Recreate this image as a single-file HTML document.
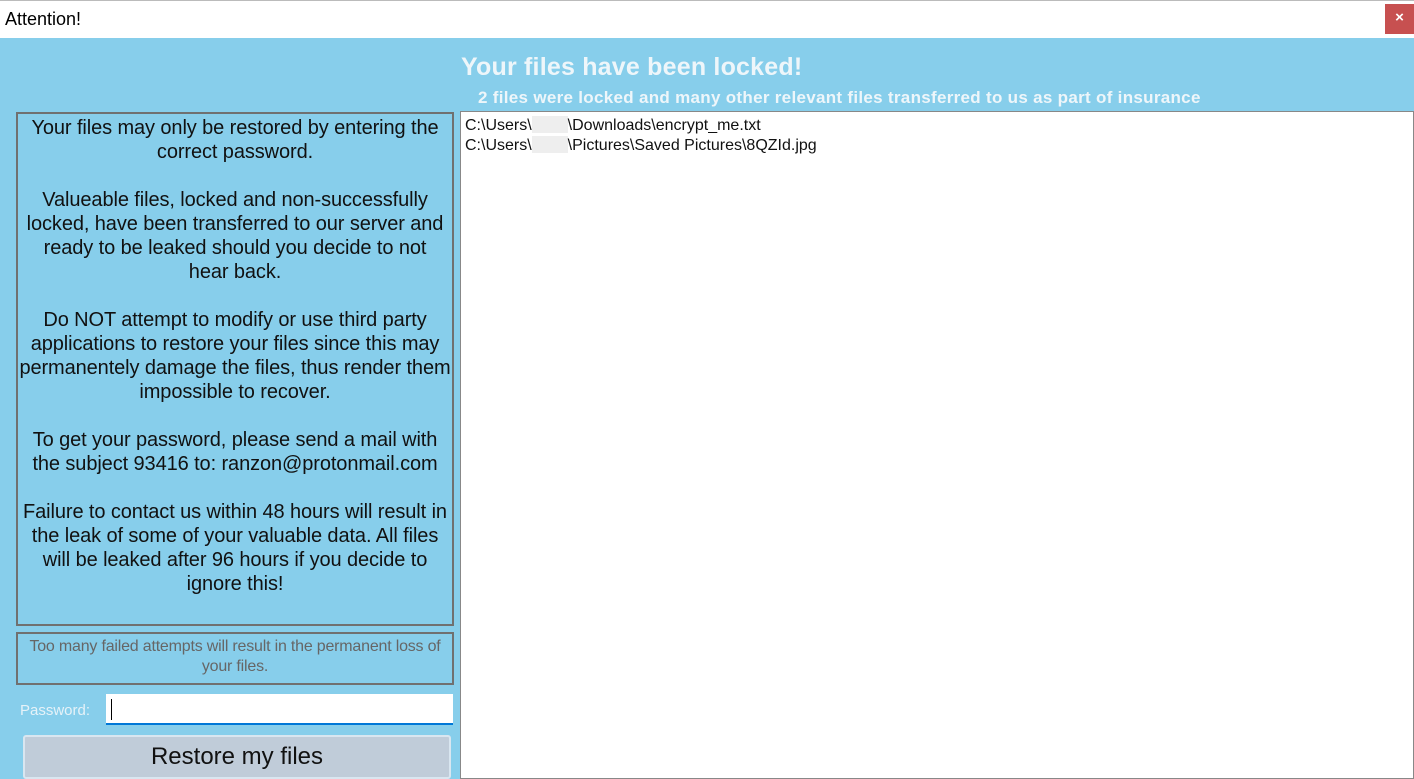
<!DOCTYPE html><html><head><style>
body{margin:0;width:1414px;height:779px;overflow:hidden;background:#87ceeb;font-family:"Liberation Sans",sans-serif;position:relative}
.a{position:absolute}
</style></head><body>
<div class="a" style="left:0;top:0;width:1414px;height:38px;background:#fff;border-top:1px solid #bbb;box-sizing:border-box"></div>
<div class="a" style="left:5px;top:9px;font-size:18px;color:#000">Attention!</div>
<div class="a" style="left:1385px;top:4px;width:29px;height:30px;background:#c75050;color:#fff;font-size:15px;font-weight:bold;text-align:center;line-height:28px">×</div>
<div class="a" style="left:461px;top:53px;font-size:25px;font-weight:bold;color:#eef6fa;letter-spacing:0.2px">Your files have been locked!</div>
<div class="a" style="left:478px;top:88px;font-size:17px;font-weight:bold;color:#eef6fa;letter-spacing:0.3px;white-space:nowrap">2 files were locked and many other relevant files transferred to us as part of insurance</div>
<div class="a" style="left:16px;top:112px;width:438px;height:514px;border:2px solid #707070;box-sizing:border-box;text-align:center;font-size:20px;line-height:24px;color:#111;padding-top:2px;white-space:nowrap;letter-spacing:-0.1px">Your files may only be restored by entering the<br>correct password.<br><br>Valueable files, locked and non-successfully<br>locked, have been transferred to our server and<br>ready to be leaked should you decide to not<br>hear back.<br><br>Do NOT attempt to modify or use third party<br>applications to restore your files since this may<br>permanentely damage the files, thus render them<br>impossible to recover.<br><br>To get your password, please send a mail with<br>the subject 93416 to: ranzon@protonmail.com<br><br>Failure to contact us within 48 hours will result in<br>the leak of some of your valuable data. All files<br>will be leaked after 96 hours if you decide to<br>ignore this!</div>
<div class="a" style="left:16px;top:632px;width:438px;height:53px;border:2px solid #707070;box-sizing:border-box;text-align:center;font-size:16px;line-height:20px;color:#666;padding-top:3px;letter-spacing:-0.2px;white-space:nowrap">Too many failed attempts will result in the permanent loss of<br>your files.</div>
<div class="a" style="left:20px;top:702px;font-size:15px;color:#e6f2f8">Password:</div>
<div class="a" style="left:106px;top:694px;width:347px;height:31px;background:#fff;border-bottom:2px solid #0078d7;box-sizing:border-box"></div>
<div class="a" style="left:111px;top:699px;width:1px;height:21px;background:#000"></div>
<div class="a" style="left:23px;top:735px;width:428px;height:44px;background:#c0ccd9;border:2px solid #d9e6f0;border-radius:3px;box-sizing:border-box;text-align:center;font-size:24px;line-height:40px;color:#111">Restore my files</div>
<div class="a" style="left:460px;top:111px;width:954px;height:668px;background:#fff;border:1px solid #888;box-sizing:border-box"></div>
<div class="a" style="left:465px;top:116px;font-size:16px;line-height:19.5px;color:#111">C:\Users\<span style="display:inline-block;width:36px;height:17px;background:#eee;vertical-align:-3px"></span>\Downloads\encrypt_me.txt<br>C:\Users\<span style="display:inline-block;width:36px;height:17px;background:#eee;vertical-align:-3px"></span>\Pictures\Saved Pictures\8QZId.jpg</div>
</body></html>
